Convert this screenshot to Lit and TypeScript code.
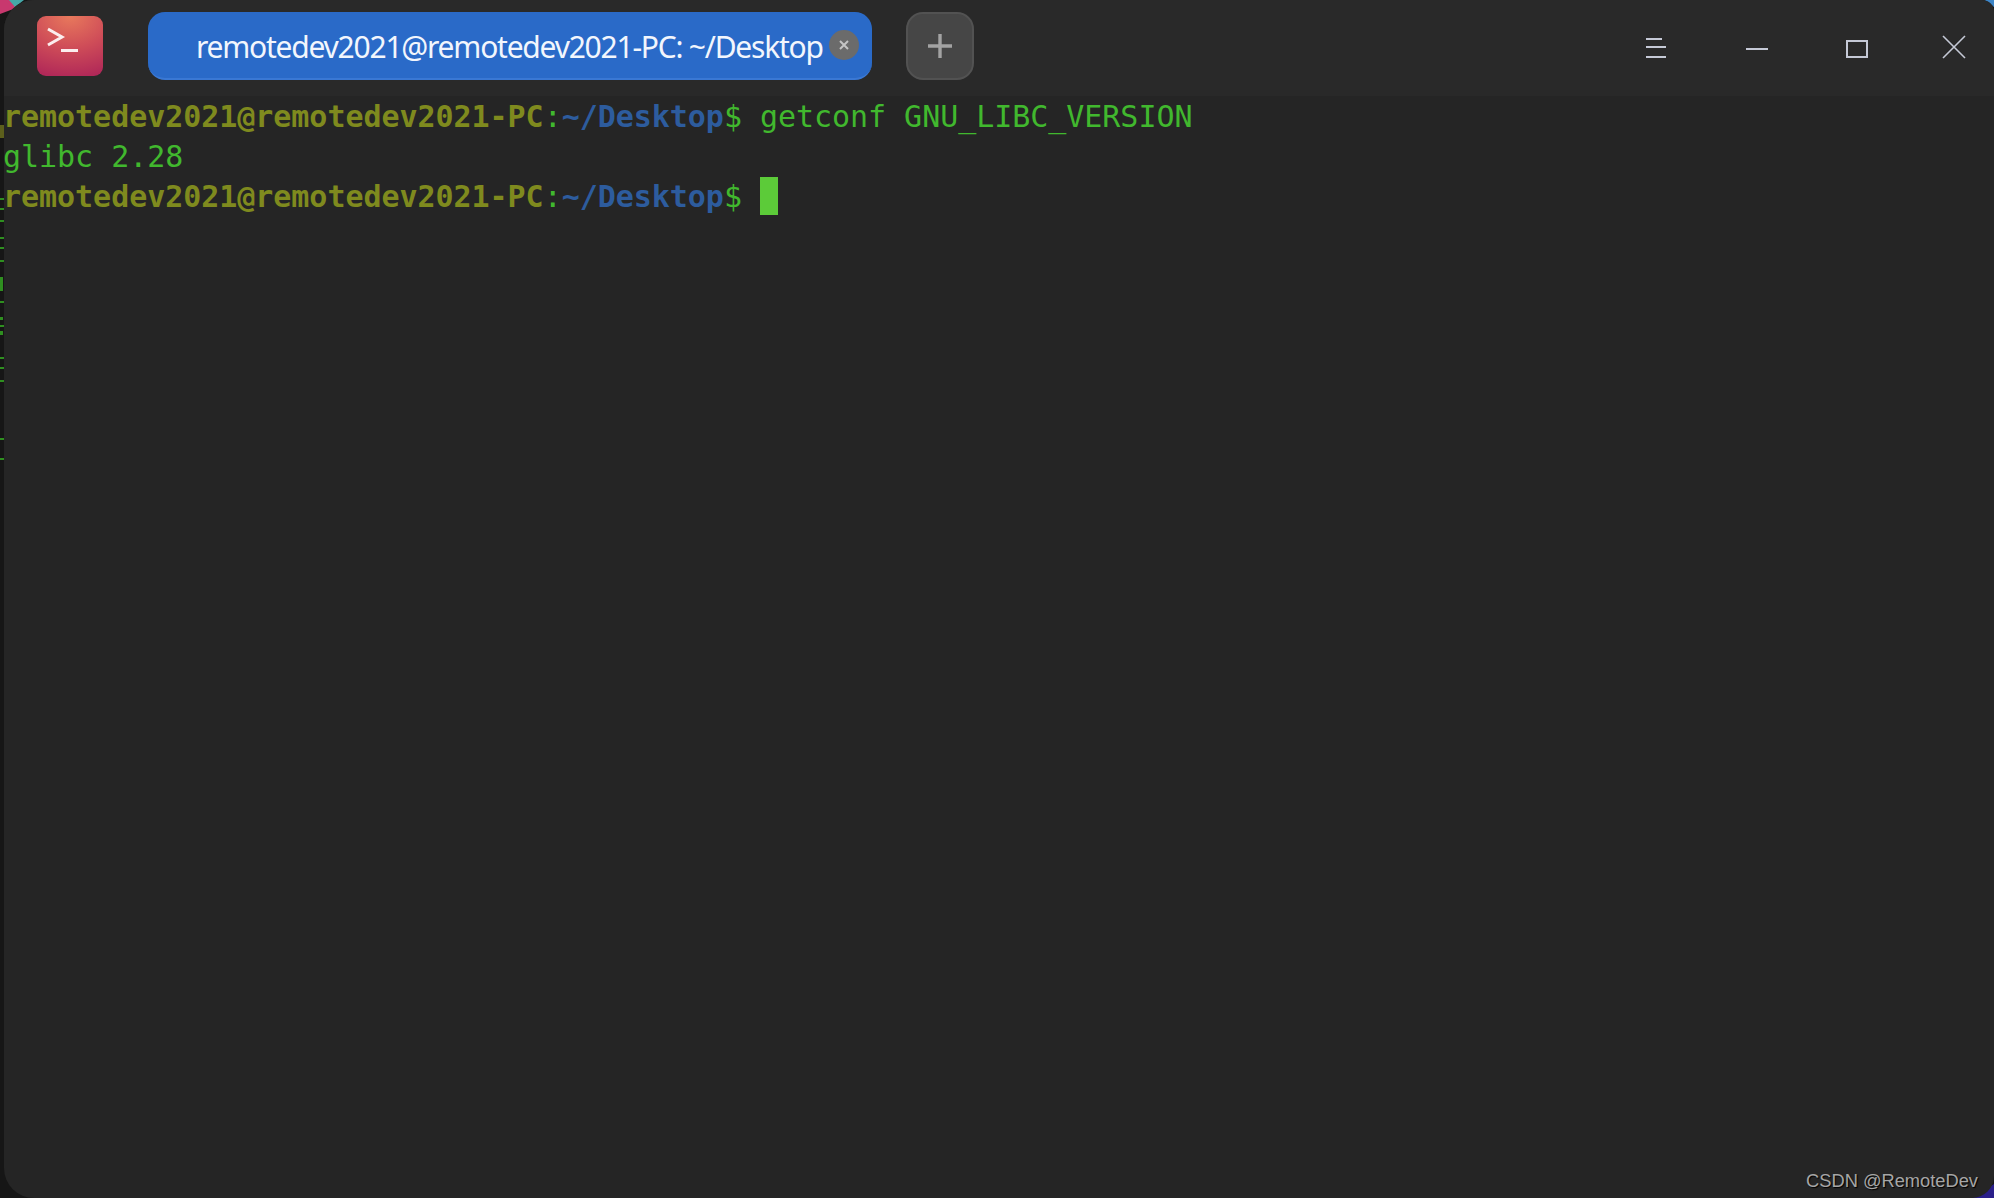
import { LitElement, html, css, svg } from "lit";
import { customElement } from "lit/decorators.js";

const MARKS: [number, number, number, number][] = [
  [198, 4, 2], [208, 4, 2], [220, 4, 2], [237, 4, 2], [247, 4, 2], [260, 4, 2],
  [277, 3, 14], [301, 4, 2], [317, 3, 3], [325, 4, 2], [331, 3, 4], [357, 4, 2],
  [367, 4, 2], [380, 4, 2], [438, 4, 2], [458, 4, 2],
].map(([y, w, h]) => [0, y, w, h]);

@customElement("app-root")
export class AppRoot extends LitElement {
  static styles = css`
    :host { display: block; width: 1994px; height: 1198px; position: relative; overflow: hidden; background: #161616; }
    .wall { position: absolute; inset: 0; }
    .window {
      position: absolute; left: 4px; top: 0; width: 1990px; height: 1198px;
      display: flex; flex-direction: column; overflow: hidden;
      background: #252525; border-radius: 30px 12px 22px 30px;
    }
    .bar { height: 96px; flex: none; background: #292929; display: flex; align-items: flex-start; }
    .logo {
      width: 66px; height: 60px; margin: 16px 0 0 33px; border-radius: 9px; flex: none; position: relative;
      background: radial-gradient(ellipse 90px 70px at 50% 0%, #e8795c 0%, #cf4d58 45%, #a81e58 100%);
    }
    .logo svg { position: absolute; inset: 0; }
    .tab {
      width: 724px; height: 68px; margin: 12px 0 0 45px; box-sizing: border-box; border-radius: 17px; flex: none;
      background: #2a6ac8; border-bottom: 2px solid #3a78d4; display: flex; align-items: center; padding: 0 13px 0 48px;
      color: #f2f6fd; font: 30px "Noto Sans", sans-serif; letter-spacing: -1.23px; white-space: nowrap;
    }
    .tab span { flex: 1; padding-top: 2px; }
    .close { width: 30px; height: 30px; border-radius: 50%; background: #6b6b6b; display: flex; align-items: center; justify-content: center; flex: none; }
    .plus {
      width: 68px; height: 68px; margin: 12px 0 0 34px; box-sizing: border-box; flex: none; border-radius: 17px;
      background: #464646; border: 2px solid #525252; display: flex; align-items: center; justify-content: center;
    }
    .controls { margin-left: auto; display: flex; }
    .ctl { display: block; flex: none; }
    .term {
      flex: 1; margin-left: -1px; padding-top: 1px; font: 30px/40px "DejaVu Sans Mono", monospace; letter-spacing: -0.04px; color: #41b82e;
    }
    .line { height: 40px; white-space: pre; }
    .user { color: #7f8a1e; font-weight: 700; }
    .path { color: #2d5c9e; font-weight: 700; }
    .cursor { display: inline-block; width: 18px; height: 38px; background: #5ccb39; vertical-align: -8px; }
    .mark { position: absolute; background: #2f8f20; }
    .blob { position: absolute; left: 0; top: 125px; width: 4px; height: 13px; background: #5c5f1c; }
    .wm {
      position: absolute; right: 16px; bottom: 6px; color: #a6a6a6; font: 18.3px "Liberation Sans", Arial, sans-serif;
      text-shadow: 1px 1px 1px #000;
    }
  `;

  render() {
    return html`
      <svg class="wall" width="1994" height="1198" viewBox="0 0 1994 1198">
        <polygon points="0,0 14,0 16,8 0,14" fill="#c8386e" />
        <polygon points="9,0 24,0 15,7" fill="#45a8a8" />
        <polygon points="1984,0 1994,0 1994,7" fill="#3d86c8" />
        <polygon points="1972,1198 1994,1198 1994,1184" fill="#2a1f8a" />
      </svg>
      <div class="window">
        <div class="bar">
          <div class="logo">
            <svg width="66" height="60" viewBox="0 0 66 60">
              ${svg`<path d="M11 13 L25 21 L11 29" fill="none" stroke="#fbeeee" stroke-width="3"/>
              <rect x="24" y="33" width="17" height="3" fill="#fbeeee"/>`}
            </svg>
          </div>
          <div class="tab">
            <span>remotedev2021@remotedev2021-PC: ~/Desktop</span>
            <div class="close">
              <svg width="12" height="12" viewBox="0 0 12 12"><path d="M2 2 L10 10 M10 2 L2 10" stroke="#c4c4c4" stroke-width="2"/></svg>
            </div>
          </div>
          <div class="plus">
            <svg width="26" height="26" viewBox="0 0 26 26"><path d="M13 1 V25 M1 13 H25" stroke="#a3a3a3" stroke-width="3.4"/></svg>
          </div>
          <div class="controls">
            <svg class="ctl" width="386" height="96" viewBox="0 0 386 96" fill="none" stroke="#c5c9d6">
              <path d="M38 39 H54 M38 47 H58 M38 57 H58" stroke-width="2"/>
              <path d="M138 49 H160" stroke-width="2"/>
              <rect x="239" y="41" width="20" height="16" stroke-width="2"/>
              <path d="M335 36 L357 58 M357 36 L335 58" stroke-width="1.6"/>
            </svg>
          </div>
        </div>
        <div class="term">
          <div class="line"><span class="user">remotedev2021@remotedev2021-PC</span>:<span class="path">~/Desktop</span>$ getconf GNU_LIBC_VERSION</div>
          <div class="line">glibc 2.28</div>
          <div class="line"><span class="user">remotedev2021@remotedev2021-PC</span>:<span class="path">~/Desktop</span>$ <span class="cursor"></span></div>
        </div>
      </div>
      <div class="blob"></div>
      ${MARKS.map(([x, y, w, h]) => html`<div class="mark" style="left:${x}px;top:${y}px;width:${w}px;height:${h}px"></div>`)}
      <div class="wm">CSDN @RemoteDev</div>
    `;
  }
}
